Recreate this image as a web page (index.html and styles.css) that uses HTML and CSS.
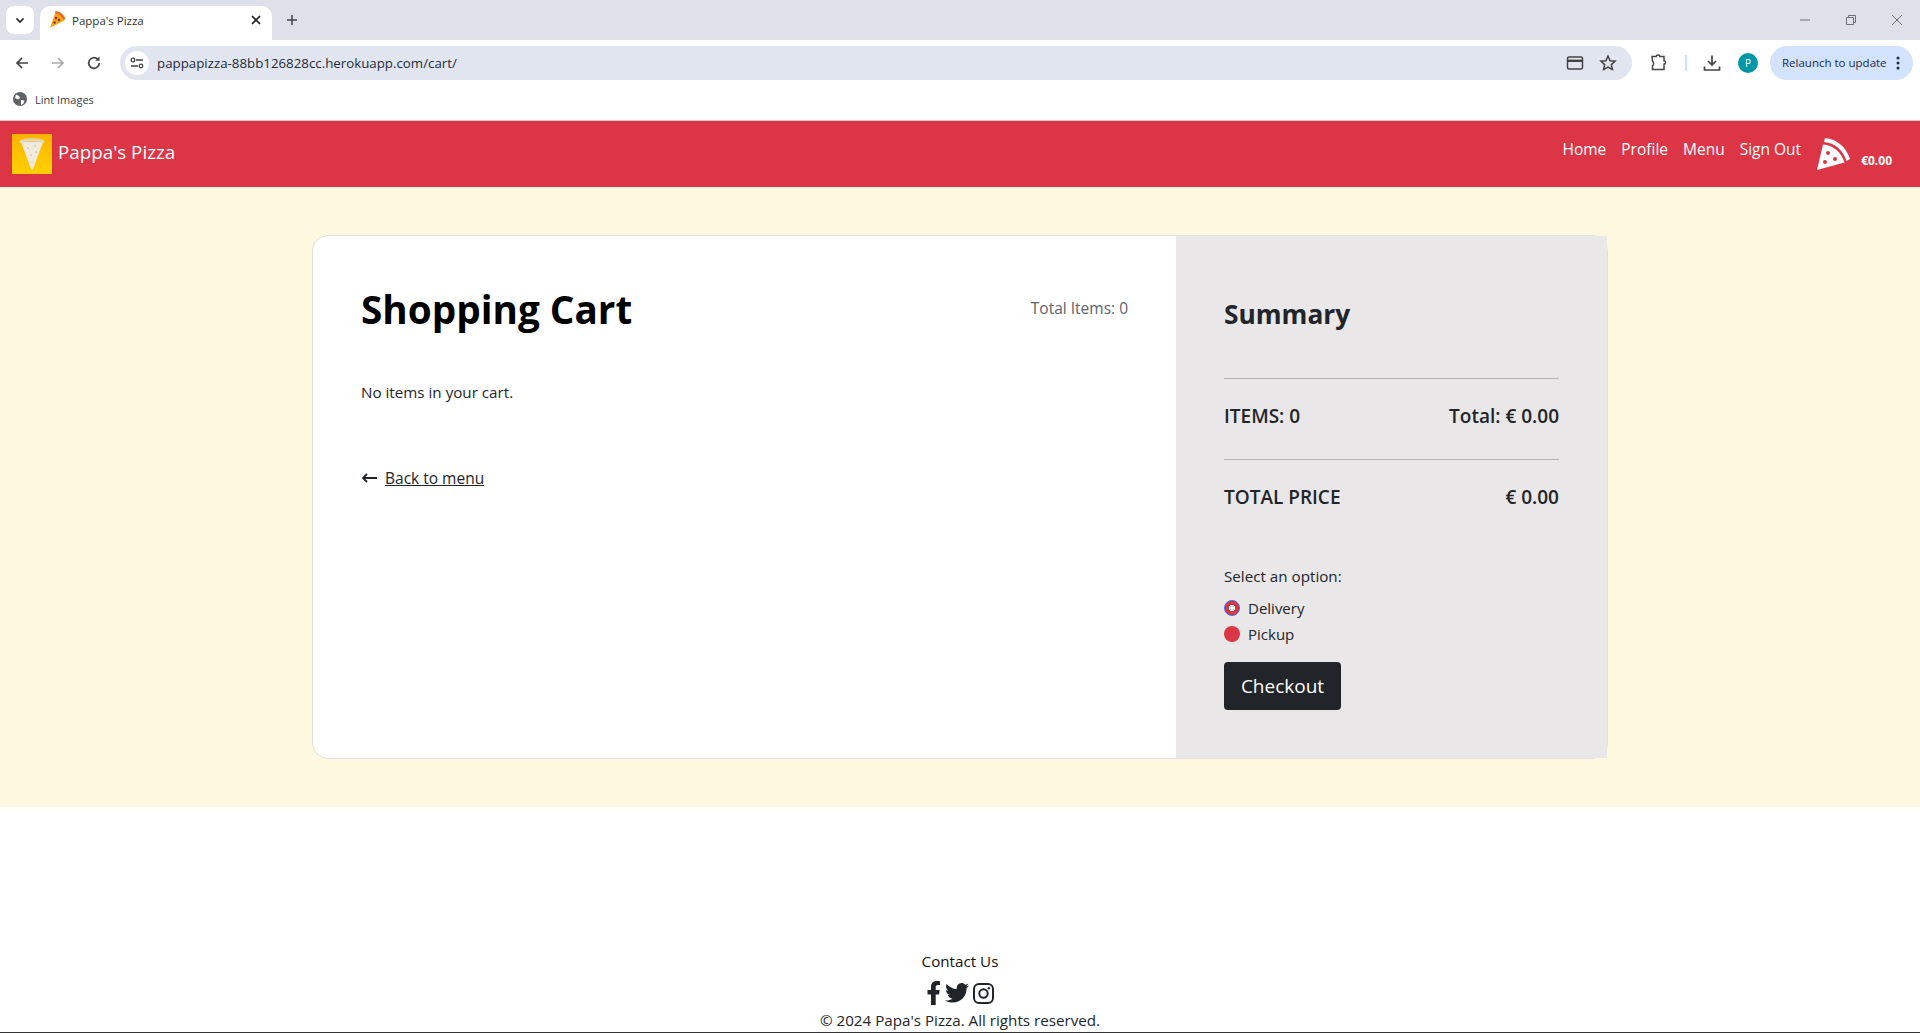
FILE: index.html
```html
<!DOCTYPE html>
<html lang="en">
<head>
    <meta charset="UTF-8">
    <meta name="viewport" content="width=device-width, initial-scale=1.0">
    <title>Pappa's Pizza</title>
    <link rel="stylesheet" href="styles.css">
</head>
<body>
    <div class="browser">
        <div class="tabstrip">
            <div class="tab-search">
                <svg width="12" height="12" viewBox="0 0 12 12"><path d="M2.5 4.5 6 8l3.5-3.5" fill="none" stroke="#1f1f1f" stroke-width="1.6"/></svg>
            </div>
            <div class="tab">
                <svg class="favicon" width="16" height="18" viewBox="0 0 16 18"><path d="M5 2.500c4 .5 7.500 3 9 7L0 17z" fill="#f7a416"/><path d="M5.500 0c4.500.3 8.500 3.500 10 8l-2 1.300C12 5.500 9 3 5 2.500z" fill="#ec6a1c"/><circle cx="6" cy="7" r="1.300" fill="#8c2a14"/><circle cx="9" cy="9" r="1.200" fill="#8c2a14"/><circle cx="4.500" cy="11.500" r="1.200" fill="#8c2a14"/></svg>
                <span class="tab-title">Pappa's Pizza</span>
                <svg class="tab-close" width="12" height="12" viewBox="0 0 12 12"><path d="M2 2l8 8M10 2l-8 8" stroke="#1f1f1f" stroke-width="1.600"/></svg>
            </div>
            <svg class="tab-new" width="12" height="12" viewBox="0 0 12 12"><path d="M6 1v10M1 6h10" stroke="#444" stroke-width="1.500"/></svg>
            <div class="win-controls">
                <svg width="12" height="12" viewBox="0 0 12 12"><path d="M1 6h10" stroke="#6b6f76"/></svg>
                <svg width="12" height="12" viewBox="0 0 12 12"><path d="M1.500 3.500h7v7h-7zM3.500 3.500v-2h7v7h-2" fill="none" stroke="#6b6f76"/></svg>
                <svg width="12" height="12" viewBox="0 0 12 12"><path d="M1 1l10 10M11 1L1 11" stroke="#6b6f76"/></svg>
            </div>
        </div>
        <div class="toolbar">
            <svg class="nav-icon" width="16" height="16" viewBox="0 0 16 16"><path d="M14 8H3M8 3 3 8l5 5" fill="none" stroke="#444" stroke-width="1.700"/></svg>
            <svg class="nav-icon" width="16" height="16" viewBox="0 0 16 16"><path d="M2 8h11M8 3l5 5-5 5" fill="none" stroke="#aaa" stroke-width="1.700"/></svg>
            <svg class="nav-icon" width="16" height="16" viewBox="0 0 16 16"><path d="M13.300 8a5.300 5.300 0 1 1-1.600-3.800" fill="none" stroke="#444" stroke-width="1.700"/><path d="M13.500 1.500v4.200H9.300z" fill="#444"/></svg>
            <div class="omnibox">
                <span class="site-info">
                    <svg width="14" height="14" viewBox="0 0 14 14"><path d="M6 4h7M1 10h7" stroke="#444" stroke-width="1.400"/><circle cx="3" cy="4" r="1.800" fill="none" stroke="#444" stroke-width="1.300"/><circle cx="11" cy="10" r="1.800" fill="none" stroke="#444" stroke-width="1.300"/></svg>
                </span>
                <span class="url">pappapizza-88bb126828cc.herokuapp.com/cart/</span>
                <svg class="omni-card" width="18" height="16" viewBox="0 0 18 16"><rect x="1.500" y="2" width="15" height="12" rx="1.500" fill="none" stroke="#444" stroke-width="1.500"/><path d="M2 5.800h14" stroke="#444" stroke-width="2.400"/></svg>
                <svg class="omni-star" width="18" height="18" viewBox="0 0 18 18"><path d="M9 2l2.100 4.700 5 .5-3.800 3.400 1.100 5L9 13l-4.400 2.600 1.100-5L1.900 7.200l5-.5z" fill="none" stroke="#444" stroke-width="1.500"/></svg>
            </div>
            <svg class="ext-icon" width="18" height="18" viewBox="0 0 18 18"><path d="M2 2.500h4.200c0-2 3.600-2 3.600 0H14v4.200c2 0 2 3.600 0 3.600v5.200H2.500v-3.500c1.500-1.500 1.500-3.500 0-5z" fill="none" stroke="#444" stroke-width="1.500"/></svg>
            <span class="tool-sep"></span>
            <svg class="dl-icon" width="18" height="18" viewBox="0 0 18 18"><path d="M9 1.500v9M5 7l4 4 4-4" fill="none" stroke="#444" stroke-width="1.700"/><path d="M1.500 12.500v3.500h15v-3.500" fill="none" stroke="#444" stroke-width="1.700"/></svg>
            <span class="avatar">P</span>
            <div class="relaunch">
                <span>Relaunch to update</span>
                <svg width="4" height="14" viewBox="0 0 4 14"><circle cx="2" cy="2" r="1.500" fill="#1c2a4a"/><circle cx="2" cy="7" r="1.500" fill="#1c2a4a"/><circle cx="2" cy="12" r="1.500" fill="#1c2a4a"/></svg>
            </div>
        </div>
        <div class="bookmarks">
            <svg width="14" height="14" viewBox="0 0 14 14"><circle cx="7" cy="7" r="7" fill="#5f6368"/><path d="M3 2.500l3 1.500 1 2-2 1.500-3-1.500zM8 8l3.500.5-1 3-2.500 1.500z" fill="#fff"/></svg>
            <span>Lint Images</span>
        </div>
    </div>

    <nav class="navbar">
        <a class="brand" href="#">
            <span class="brand-logo">
                <svg width="28" height="34" viewBox="0 0 28 34"><path d="M3 5 13 32c.4 1 1.600 1 2 0L25 5z" fill="#f0ebdc"/><path d="M2 3.500C9 .5 19 .5 26 3.500c.8.500.5 2-.3 2.300C18 3.800 10 3.800 2.300 5.800c-.8-.3-1.100-1.800-.3-2.300z" fill="#ddd6c3"/><circle cx="10" cy="11" r=".7" fill="#b9b09a"/><circle cx="17" cy="9" r=".7" fill="#b9b09a"/><circle cx="18" cy="15" r=".7" fill="#b9b09a"/><circle cx="13" cy="18" r=".7" fill="#b9b09a"/><circle cx="14" cy="25" r=".6" fill="#b9b09a"/></svg>
            </span>
            <span>Pappa's Pizza</span>
        </a>
        <div class="nav-links">
            <a href="#">Home</a>
            <a href="#">Profile</a>
            <a href="#">Menu</a>
            <a href="#">Sign Out</a>
        </div>
        <div class="nav-cart">
            <svg width="33" height="32" viewBox="0 0 33 32"><path d="M8 0C20 1 29 9 33 21l-3.500 2C26 12 18 5 7 4z" fill="#fff"/><path d="M6 6.500C16 7 24 14 27.500 24.500L0 32z" fill="#fff"/><circle cx="11" cy="15" r="2" fill="#dc3545"/><circle cx="18" cy="21" r="2" fill="#dc3545"/><circle cx="8" cy="24" r="2" fill="#dc3545"/></svg>
            <span class="cart-total">€0.00</span>
        </div>
    </nav>

    <main class="page">
        <div class="card">
            <section class="cart">
                <div class="cart-head">
                    <h1>Shopping Cart</h1>
                    <span class="total-items">Total Items: 0</span>
                </div>
                <p class="empty">No items in your cart.</p>
                <a class="back" href="#"><span class="back-arrow">
                    <svg width="16" height="10" viewBox="0 0 16 10"><path d="M16 5H2M6 1 2 5l4 4" fill="none" stroke="#212529" stroke-width="1.800"/></svg>
                </span><span class="back-text">Back to menu</span></a>
            </section>
            <aside class="summary">
                <h2>Summary</h2>
                <hr>
                <div class="summary-row"><span>ITEMS: 0</span><span>Total: € 0.00</span></div>
                <hr>
                <div class="summary-row"><span>TOTAL PRICE</span><span>€ 0.00</span></div>
                <p class="option-label">Select an option:</p>
                <label class="option"><span class="radio radio-on"></span>Delivery</label>
                <label class="option"><span class="radio"></span>Pickup</label>
                <button class="checkout">Checkout</button>
            </aside>
        </div>
    </main>

    <footer class="footer">
        <div class="contact">Contact Us</div>
        <div class="social">
            <svg width="14" height="24" viewBox="0 0 14 24"><path d="M4 24V13.500H.5V9H4V6c0-4 2.300-6 5.800-6 1.600 0 3.200.2 3.200.2v3.800h-1.900C9.200 4 8.700 5 8.700 6.200V9h4l-.7 4.500H8.700V24z" fill="#212529"/></svg>
            <svg width="24" height="20" viewBox="0 0 24 20"><path d="M24 2.400c-.9.400-1.800.7-2.800.8 1-.6 1.800-1.500 2.200-2.700-1 .6-2 1-3.100 1.200C19.300.7 18 0 16.600 0c-3.200 0-5.500 3-4.800 6C7.700 5.800 4.100 3.900 1.700.9.400 3.100 1 6 3.200 7.500c-.8 0-1.600-.2-2.200-.6 0 2.300 1.600 4.500 4 5-.7.200-1.500.2-2.200.1.600 2 2.500 3.400 4.600 3.400-2 1.600-4.600 2.300-7.300 2 2.200 1.400 4.800 2.200 7.500 2.200 9.100 0 14.300-7.700 14-14.600 1-.7 1.800-1.600 2.400-2.600z" fill="#212529"/></svg>
            <svg width="21" height="21" viewBox="0 0 21 21"><rect x="1" y="1" width="19" height="19" rx="5" fill="none" stroke="#212529" stroke-width="2"/><circle cx="10.500" cy="10.500" r="4.200" fill="none" stroke="#212529" stroke-width="2"/><circle cx="15.800" cy="5.200" r="1.200" fill="#212529"/></svg>
        </div>
        <div class="copyright">© 2024 Papa's Pizza. All rights reserved.</div>
    </footer>
</body>
</html>
```

FILE: styles.css
```css
body {
    margin: 0;
    height: 1033px;
    overflow: hidden;
    font-family: "Open Sans", "Noto Sans", Arial, sans-serif;
    color: #212529;
    background-color: white;
    display: flex;
    flex-direction: column;
}

a {
    color: inherit;
    text-decoration: none;
}

/* browser window */
.browser {
    height: 121px;
    flex-shrink: 0;
    background-color: white;
    border-bottom: 1px solid #c9c9c9;
    box-sizing: border-box;
}

.tabstrip {
    height: 40px;
    background-color: #dee1e9;
    display: flex;
    align-items: flex-end;
    padding-left: 6px;
}

.tab-search {
    width: 28px;
    height: 28px;
    margin-bottom: 6px;
    background-color: white;
    border-radius: 8px;
    display: flex;
    align-items: center;
    justify-content: center;
}

.tab {
    width: 232px;
    height: 34px;
    margin-left: 6px;
    background-color: white;
    border-radius: 10px 10px 0 0;
    display: flex;
    align-items: center;
    padding: 0 10px 6px;
    box-sizing: border-box;
    font-size: 11.500px;
    color: #333;
}

.tab-title {
    margin-left: 6px;
    flex: 1;
}

.tab-new {
    margin: 0 0 14px 14px;
}

.win-controls {
    margin-left: auto;
    display: flex;
    gap: 34px;
    padding: 0 17px 14px 0;
}

.toolbar {
    height: 46px;
    display: flex;
    align-items: center;
    padding-left: 14px;
}

.nav-icon {
    margin-right: 20px;
}

.omnibox {
    width: 1512px;
    height: 34px;
    margin-left: -2px;
    background-color: #e1e5ef;
    border-radius: 17px;
    display: flex;
    align-items: center;
    padding: 0 15px 0 5px;
    box-sizing: border-box;
}

.site-info {
    width: 24px;
    height: 24px;
    background-color: white;
    border-radius: 50%;
    display: flex;
    align-items: center;
    justify-content: center;
}

.url {
    margin-left: 8px;
    font-size: 13.300px;
    color: #1f2a37;
    flex: 1;
}

.omni-star {
    margin-left: 15px;
}

.ext-icon {
    margin-left: 18px;
}

.tool-sep {
    width: 2px;
    height: 16px;
    margin: 0 17px;
    background-color: #d3e0f5;
}

.dl-icon {
    margin-left: -1px;
}

.avatar {
    width: 20px;
    height: 20px;
    margin-left: 17px;
    background-color: #0097a7;
    border-radius: 50%;
    color: white;
    font-size: 10px;
    display: flex;
    align-items: center;
    justify-content: center;
}

.relaunch {
    width: 143px;
    height: 34px;
    margin-left: 12px;
    background-color: #d3e3fd;
    border-radius: 17px;
    display: flex;
    align-items: center;
    justify-content: space-between;
    padding: 0 13px 0 12px;
    box-sizing: border-box;
    font-size: 11.500px;
    color: #1c2a4a;
}

.relaunch span {
    margin-top: -1px;
}

.bookmarks {
    height: 26px;
    display: flex;
    align-items: center;
    gap: 8px;
    padding-left: 13px;
    font-size: 11px;
    color: #3c4043;
}

/* site header */
.navbar {
    height: 66px;
    flex-shrink: 0;
    background-color: #dc3545;
    color: white;
    display: flex;
    align-items: center;
    padding: 0 28px 0 12px;
}

.brand {
    display: flex;
    align-items: center;
    gap: 6px;
    font-size: 18.800px;
    line-height: 36px;
    margin-right: auto;
}

.brand span:last-child {
    margin-top: -4px;
}

.brand-logo {
    width: 40px;
    height: 40px;
    background: linear-gradient(#ffb300, #ffd000);
    display: flex;
    align-items: center;
    justify-content: center;
}

.nav-links {
    display: flex;
    gap: 15px;
    font-size: 15.500px;
    margin-top: -10px;
}

.nav-cart {
    display: flex;
    align-items: center;
    margin-left: 16px;
    gap: 11px;
}

.cart-total {
    font-size: 12px;
    font-weight: bold;
    margin-top: 12px;
}

/* cart */
.page {
    height: 620px;
    flex-shrink: 0;
    background-color: #fff8e1;
    padding-top: 48px;
    box-sizing: border-box;
}

.card {
    width: 1296px;
    height: 524px;
    margin: 0 auto;
    display: flex;
    background-color: white;
    border: 1px solid #e0e0dc;
    border-radius: 16px;
    box-sizing: border-box;
}

.cart {
    flex: 1;
    padding: 48px;
    font-size: 15.200px;
}

.cart-head {
    display: flex;
    justify-content: space-between;
    align-items: center;
    height: 48px;
}

h1 {
    margin: 2px 0 0;
    font-size: 38.700px;
    color: black;
}

.total-items {
    color: #5c636a;
    font-size: 15.500px;
}

.empty {
    margin: 49px 0 0;
    line-height: 22px;
}

.back {
    display: flex;
    align-items: center;
    margin-top: 64px;
    line-height: 22px;
    font-size: 15.500px;
}

.back-arrow {
    display: flex;
    margin-right: 8px;
}

.back-text {
    text-decoration: underline;
}

.summary {
    width: 431px;
    flex-shrink: 0;
    background-color: #e9e7e8;
    padding: 48px;
    box-sizing: border-box;
}

h2 {
    margin: 13px 0 0;
    font-size: 26.300px;
    line-height: 34px;
}

hr {
    margin: 0;
    border: none;
    border-top: 1px solid #b3b3b3;
}

.summary h2 + hr {
    margin-top: 47px;
}

.summary-row {
    display: flex;
    justify-content: space-between;
    align-items: center;
    height: 80px;
    padding-bottom: 6px;
    box-sizing: border-box;
    font-size: 19px;
    font-weight: 600;
}

.option-label {
    margin: 25px 0 0;
    font-size: 15.200px;
    line-height: 22px;
}

.option {
    display: flex;
    align-items: center;
    gap: 8px;
    height: 26px;
    font-size: 15px;
}

.option-label + .option {
    margin-top: 8px;
}

.radio {
    width: 16px;
    height: 16px;
    border-radius: 50%;
    background-color: #dc3545;
    box-sizing: border-box;
}

.radio-on {
    background: radial-gradient(circle, white 3px, #dc3545 3.500px);
    border: 1.500px solid #2f6fdc;
}

.checkout {
    display: block;
    width: 117px;
    height: 48px;
    margin-top: 15px;
    padding: 0;
    background-color: #212529;
    color: white;
    border: none;
    border-radius: 4px;
    font-family: inherit;
    font-size: 19px;
}

/* footer */
.footer {
    flex: 1;
    border-bottom: 1px solid #333;
    box-sizing: border-box;
    display: flex;
    flex-direction: column;
    align-items: center;
    justify-content: flex-end;
    padding-bottom: 1px;
    font-size: 15.200px;
    line-height: 22px;
}

.contact {
    color: #111;
}

.social {
    display: flex;
    align-items: center;
    gap: 4px;
    height: 30px;
    margin: 6px 0 1px;
}
```
